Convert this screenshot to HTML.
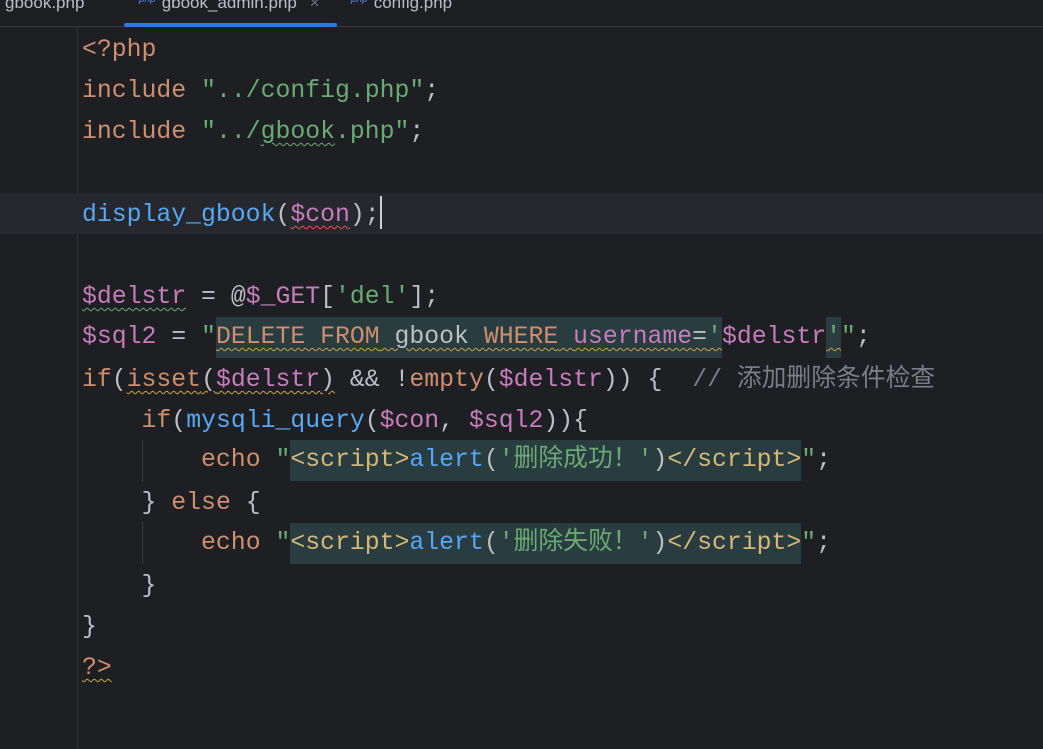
<!DOCTYPE html>
<html><head><meta charset="utf-8"><style>
html,body{margin:0;padding:0}
body{width:1043px;height:749px;background:#1e1f22;position:relative;overflow:hidden;font-family:"Liberation Mono","Noto Sans CJK SC",monospace;}
.tabs{position:absolute;left:0;top:0;width:1043px;height:26px;border-bottom:1px solid #393b40;background:#1e1f22;font-family:"Liberation Sans",sans-serif;font-size:17px;color:#bcbec4}
.tab{position:absolute;top:-7px;white-space:nowrap}
.pi{font-size:10px;font-style:italic;color:#548af7;margin-right:6px;vertical-align:6px}
.ul{position:absolute;left:124px;top:23px;width:213px;height:4px;background:#3574f0;border-radius:2px}
.gut{position:absolute;left:77px;top:27px;width:1px;height:722px;background:#313236}
.cur{position:absolute;left:0;top:193px;width:1043px;height:41px;background:#26282e}
.ln{position:absolute;left:82px;height:41px;line-height:41px;font-size:24.8px;white-space:pre;color:#bcbec4}
.k{color:#cf8e6d}.s{color:#6aab73}.v{color:#c77dbb}.f{color:#56a8f5}.c{color:#7a7e85}.t{color:#d5b778}
.h{background:#293c40;display:inline-block;height:41px;vertical-align:top}
.wg{text-decoration:underline wavy #6aab73;text-decoration-thickness:1px;text-underline-offset:4px}
.wy{text-decoration:underline wavy #c9a64a;text-decoration-thickness:1px;text-underline-offset:4px}
.wr{text-decoration:underline wavy #d45a5a;text-decoration-thickness:1px;text-underline-offset:4px}
.guide{position:absolute;left:142px;width:1px;background:#393b40}
.caret{position:absolute;left:380px;top:196px;width:2px;height:33px;background:#ced0d6}
</style></head><body>
<div class="tabs">
<div class="tab" style="left:5px">gbook.php</div>
<div class="tab" style="left:139px"><span class="pi">php</span>gbook_admin.php <span style="color:#6f737a;margin-left:8px">×</span></div>
<div class="tab" style="left:351px"><span class="pi">php</span>config.php</div>
<div class="ul"></div>
</div>
<div class="gut"></div>
<div class="cur"></div>
<div class="guide" style="top:440px;height:42px"></div>
<div class="guide" style="top:522px;height:42px"></div>
<div class="ln" style="top:30px"><span class="k">&lt;?php</span></div>
<div class="ln" style="top:71px"><span class="k">include</span> <span class="s">"../config.php"</span>;</div>
<div class="ln" style="top:112px"><span class="k">include</span> <span class="s">"../<span class="wg">gbook</span>.php"</span>;</div>
<div class="ln" style="top:195px"><span class="f">display_gbook</span>(<span class="v wr">$con</span>);</div>
<div class="caret"></div>
<div class="ln" style="top:277px"><span class="v wg">$delstr</span> = @<span class="v">$_GET</span>[<span class="s">'del'</span>];</div>
<div class="ln" style="top:317px"><span class="v">$sql2</span> = <span class="s">"</span><span class="h"><span class="wy"><span class="k">DELETE FROM</span> gbook <span class="k">WHERE</span> <span class="v">username</span>=<span class="s">'</span></span></span><span class="v">$delstr</span><span class="h"><span class="wy s">'</span></span><span class="s">"</span>;</div>
<div class="ln" style="top:360px"><span class="k">if</span>(<span class="wy"><span class="k">isset</span>(<span class="v">$delstr</span>)</span> &amp;&amp; !<span class="k">empty</span>(<span class="v">$delstr</span>)) {  <span class="c">// 添加删除条件检查</span></div>
<div class="ln" style="top:401px">    <span class="k">if</span>(<span class="f">mysqli_query</span>(<span class="v">$con</span>, <span class="v">$sql2</span>)){</div>
<div class="ln" style="top:440px">        <span class="k">echo</span> <span class="s">"</span><span class="h"><span class="t">&lt;script&gt;</span><span class="f">alert</span>(<span class="s">'删除成功！'</span>)<span class="t">&lt;/script&gt;</span></span><span class="s">"</span>;</div>
<div class="ln" style="top:483px">    } <span class="k">else</span> {</div>
<div class="ln" style="top:523px">        <span class="k">echo</span> <span class="s">"</span><span class="h"><span class="t">&lt;script&gt;</span><span class="f">alert</span>(<span class="s">'删除失败！'</span>)<span class="t">&lt;/script&gt;</span></span><span class="s">"</span>;</div>
<div class="ln" style="top:566px">    }</div>
<div class="ln" style="top:607px">}</div>
<div class="ln" style="top:648px"><span class="k wy">?&gt;</span></div>
</body></html>
